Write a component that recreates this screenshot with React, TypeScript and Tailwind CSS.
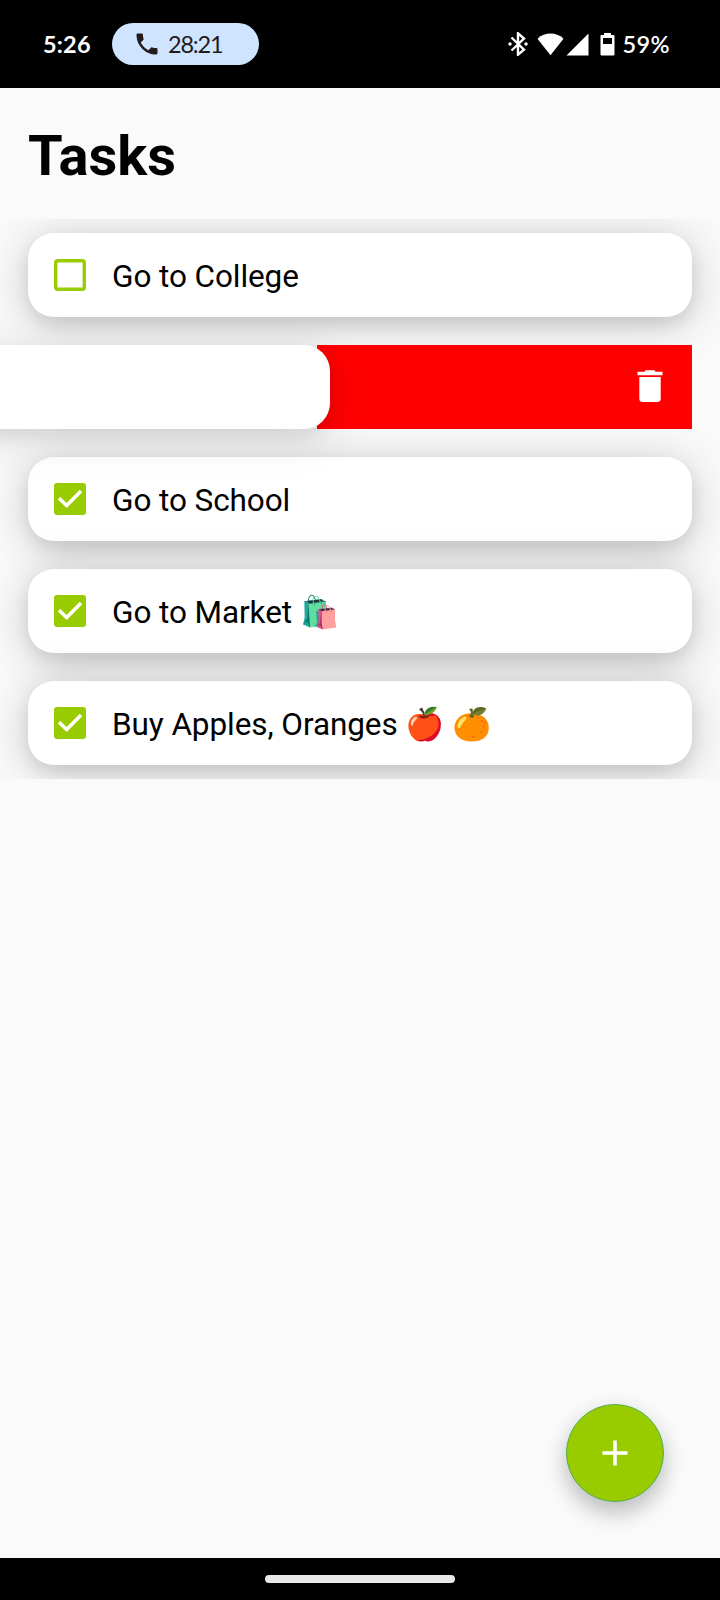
import React from "react";

type Task = { label: string; done: boolean };

const first: Task = { label: "Go to College", done: false };
const rest: Task[] = [
  { label: "Go to School", done: true },
  { label: "Go to Market 🛍️", done: true },
  { label: "Buy Apples, Oranges 🍎 🍊", done: true },
];

function StatusBar() {
  return (
    <header className="flex h-[88px] shrink-0 items-center bg-black pr-[50px] pl-[43px] font-['Lato',sans-serif] text-[23.5px] text-white">
      <span className="w-[69px] pt-[2px] font-bold tracking-[0.2px]">5:26</span>
      <div className="flex h-[42px] w-[147px] items-center rounded-full bg-[#cfe4ff] pl-[21px] text-[#231a1c]">
        <svg className="h-[28px] w-[28px]" viewBox="0 0 24 24" fill="currentColor">
          <path d="M3 4c0-.55.45-1 1-1h3.5c.55 0 1 .45 1 1 0 1.25.2 2.45.57 3.57.11.35.03.74-.25 1.02l-2.2 2.2c1.44 2.83 3.76 5.14 6.59 6.59l2.2-2.2c.27-.27.67-.36 1.02-.24 1.12.37 2.33.57 3.57.57.55 0 1 .45 1 1V20c0 .55-.45 1-1 1C10.61 21 3 13.39 3 4z" />
        </svg>
        <span className="ml-[7px] pt-[2px] tracking-[-1.2px]">28:21</span>
      </div>
      <div className="ml-auto flex items-center">
        <svg className="h-[24px] w-[20px]" viewBox="0 0 20 24" fill="none" stroke="white" strokeWidth="2.4">
          <path d="M3.5 5.5 16 17.7 10 22.7V1.3L16 6.6 3.5 18.5" />
          <circle cx="2" cy="12" r="1.7" fill="white" stroke="none" />
          <circle cx="18" cy="12" r="1.7" fill="white" stroke="none" />
        </svg>
        <svg className="ml-[9px] h-[23px] w-[27px]" viewBox="0 0 27 23" fill="white">
          <path d="M0.5 5.7C8-1.1 19-1.1 26.5 5.7L13.5 22.3Z" />
        </svg>
        <svg className="ml-[2px] h-[23px] w-[23px]" viewBox="0 0 23 23" fill="white">
          <path d="M22.5 0.5v22H0.5z" />
        </svg>
        <svg className="ml-[11px] h-[24px] w-[15px]" viewBox="0 0 15 24" fill="white">
          <path
            fillRule="evenodd"
            d="M4 1h7v2h2.500q1 0 1 1v18.500q0 1-1 1h-12q-1 0-1-1V4q0-1 1-1H4zM3 6v6h9V6z"
          />
        </svg>
        <span className="ml-[7px] pt-[2px] font-semibold tracking-[0.4px]">59%</span>
      </div>
    </header>
  );
}

function Checkbox({ done }: { done: boolean }) {
  return (
    <svg className="h-[32px] w-[32px] shrink-0" viewBox="0 0 32 32" fill="none">
      {done ? (
        <>
          <rect width="32" height="32" rx="3" fill="#99cc00" />
          <path d="M5 15.300 12.700 22.500 27 8" stroke="white" strokeWidth="3.500" />
        </>
      ) : (
        <rect x="1.700" y="1.700" width="28.600" height="28.600" rx="2" stroke="#99cc00" strokeWidth="3.400" />
      )}
    </svg>
  );
}

function TaskCard({ task }: { task: Task }) {
  return (
    <div className="mx-[28px] flex h-[84px] shrink-0 items-center rounded-[26px] bg-white pl-[26px] shadow-[0_8px_16px_rgba(0,0,0,0.08),0_6px_46px_rgba(0,0,0,0.21)]">
      <Checkbox done={task.done} />
      <span className="ml-[26px] pt-[3px] text-[31.5px] leading-[40px] tracking-[-0.08px] whitespace-pre">{task.label}</span>
    </div>
  );
}

function SwipedRow() {
  return (
    <div className="relative z-10 flex h-[84px] shrink-0">
      <div className="z-10 -ml-[60px] w-[390px] shrink-0 rounded-[26px] bg-white shadow-[0_8px_16px_rgba(0,0,0,0.06),0_8px_44px_rgba(0,0,0,0.13)]" />
      <div className="mr-[28px] -ml-[13px] flex flex-1 items-center justify-end bg-[#ff0000] pr-[29px]">
        <svg className="mb-[2px] h-[32px] w-[26px]" viewBox="0 0 26 32" fill="white">
          <path d="M0.500 1.700H7.500L8.500.3H17.500L18.500 1.700H25.500V5.300H0.500z" />
          <path d="M2.300 7H23.700V28.500Q23.700 32 20.200 32H5.800Q2.300 32 2.300 28.500z" />
        </svg>
      </div>
    </div>
  );
}

export default function App() {
  return (
    <div className="flex h-[1600px] w-[720px] flex-col overflow-hidden bg-[#fafafa] font-['Roboto',sans-serif] text-black">
      <StatusBar />
      <h1 className="flex h-[131px] shrink-0 items-center pt-[4px] pl-[28px] text-[56px] leading-[66px] font-bold">Tasks</h1>
      <main className="flex h-[560px] shrink-0 flex-col gap-[28px] overflow-hidden py-[14px]">
        <TaskCard task={first} />
        <SwipedRow />
        {rest.map((t) => (
          <TaskCard key={t.label} task={t} />
        ))}
      </main>
      <div className="flex flex-1 items-end justify-end pr-[56px] pb-[56px]">
        <button className="flex h-[98px] w-[98px] items-center justify-center rounded-full border border-[#4fae50] bg-[#99cc00] shadow-[0_12px_22px_rgba(0,0,0,0.2),0_4px_24px_rgba(0,0,0,0.07)]">
          <svg className="h-[26px] w-[26px]" viewBox="0 0 26 26" stroke="white" strokeWidth="3.600">
            <path d="M13 .5v25M.5 13h25" />
          </svg>
        </button>
      </div>
      <footer className="flex h-[42px] shrink-0 items-center justify-center bg-black">
        <div className="h-[8px] w-[190px] rounded-full bg-[#e8e8e8]" />
      </footer>
    </div>
  );
}
